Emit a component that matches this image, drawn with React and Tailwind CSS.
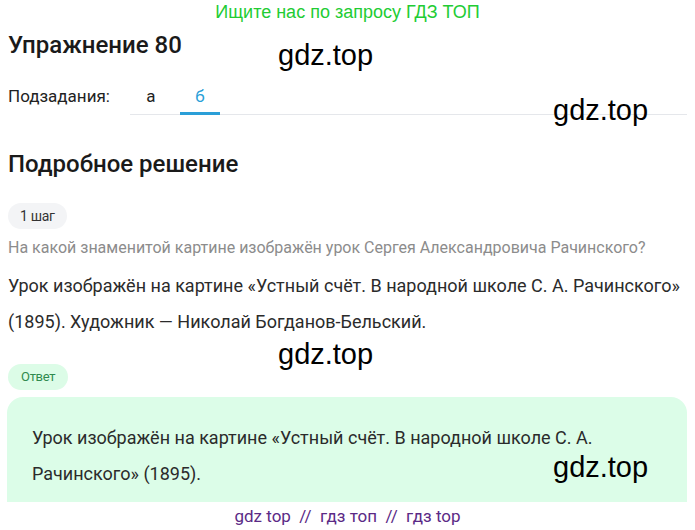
import React from 'react';

const Watermark = ({ className }) => (
  <span
    className={`absolute text-[29px] leading-none text-black font-['Liberation_Sans',Arial,sans-serif] ${className}`}
  >
    gdz.top
  </span>
);

export default function App() {
  return (
    <div className="relative w-[695px] h-[530px] overflow-hidden bg-white font-['Roboto',sans-serif] text-[#1a1a1a]">
      <div className="text-center text-[18px] leading-[24px] text-[#22cc33] font-['Liberation_Sans',Arial,sans-serif]">
        Ищите нас по запросу ГДЗ ТОП
      </div>

      <div className="px-2">
        <h1 className="mt-[6px] text-[24px] leading-[30px] font-medium">Упражнение 80</h1>

        <div className="mt-[24px] flex items-end">
          <span className="text-[17px] leading-[24px] pb-[7px] text-[#222]">Подзадания:</span>
          <div className="ml-[20px] flex flex-1 border-b border-[#e5e7eb]">
            <span className="w-[42px] text-center text-[17px] leading-[24px] pb-[6px] text-[#222]">а</span>
            <span className="ml-[8px] w-[40px] text-center text-[17px] leading-[24px] pb-[3px] text-[#2a9fd8] border-b-[3px] border-[#2a9fd8] -mb-px">
              б
            </span>
          </div>
        </div>

        <h2 className="mt-[34px] text-[24px] leading-[30px] font-medium">Подробное решение</h2>

        <div className="mt-[24px] h-[26px]">
          <span className="inline-block rounded-full bg-[#f3f4f6] px-[12px] text-[14px] tracking-[-0.3px] leading-[26px] text-[#333]">
            1 шаг
          </span>
        </div>
        <p className="mt-[8px] text-[16px] leading-[22px] text-[#8c8c8c]">
          На какой знаменитой картине изображён урок Сергея Александровича Рачинского?
        </p>
        <p className="mt-[9px] text-[18px] leading-[36px] text-[#2b2b2b]">
          Урок изображён на картине «Устный счёт. В народной школе С. А. Рачинского» (1895). Художник — Николай Богданов-Бельский.
        </p>

        <div className="mt-[24px] h-[26px]">
          <span className="inline-block rounded-full bg-[#dcfce7] px-[13px] text-[13px] tracking-[-0.3px] leading-[26px] text-[#2f8a4e]">
            Ответ
          </span>
        </div>
        <div className="mt-[7px] ml-[-1px] rounded-t-[16px] bg-[#dcfde8] px-[25px] pt-[23px] pb-[10px]">
          <p className="text-[18px] leading-[36px] text-[#2b2b2b]">
            Урок изображён на картине «Устный счёт. В народной школе С. А. Рачинского» (1895).
          </p>
        </div>
      </div>

      <div className="absolute left-0 right-0 bottom-0 h-[28px] bg-white text-center text-[17px] leading-[28px] text-[#5b2a86]">
        gdz top &nbsp;//&nbsp; гдз топ &nbsp;//&nbsp; гдз top
      </div>

      <Watermark className="left-[278px] top-[41px]" />
      <Watermark className="left-[553px] top-[96px]" />
      <Watermark className="left-[278px] top-[340px]" />
      <Watermark className="left-[553px] top-[453px]" />
    </div>
  );
}
